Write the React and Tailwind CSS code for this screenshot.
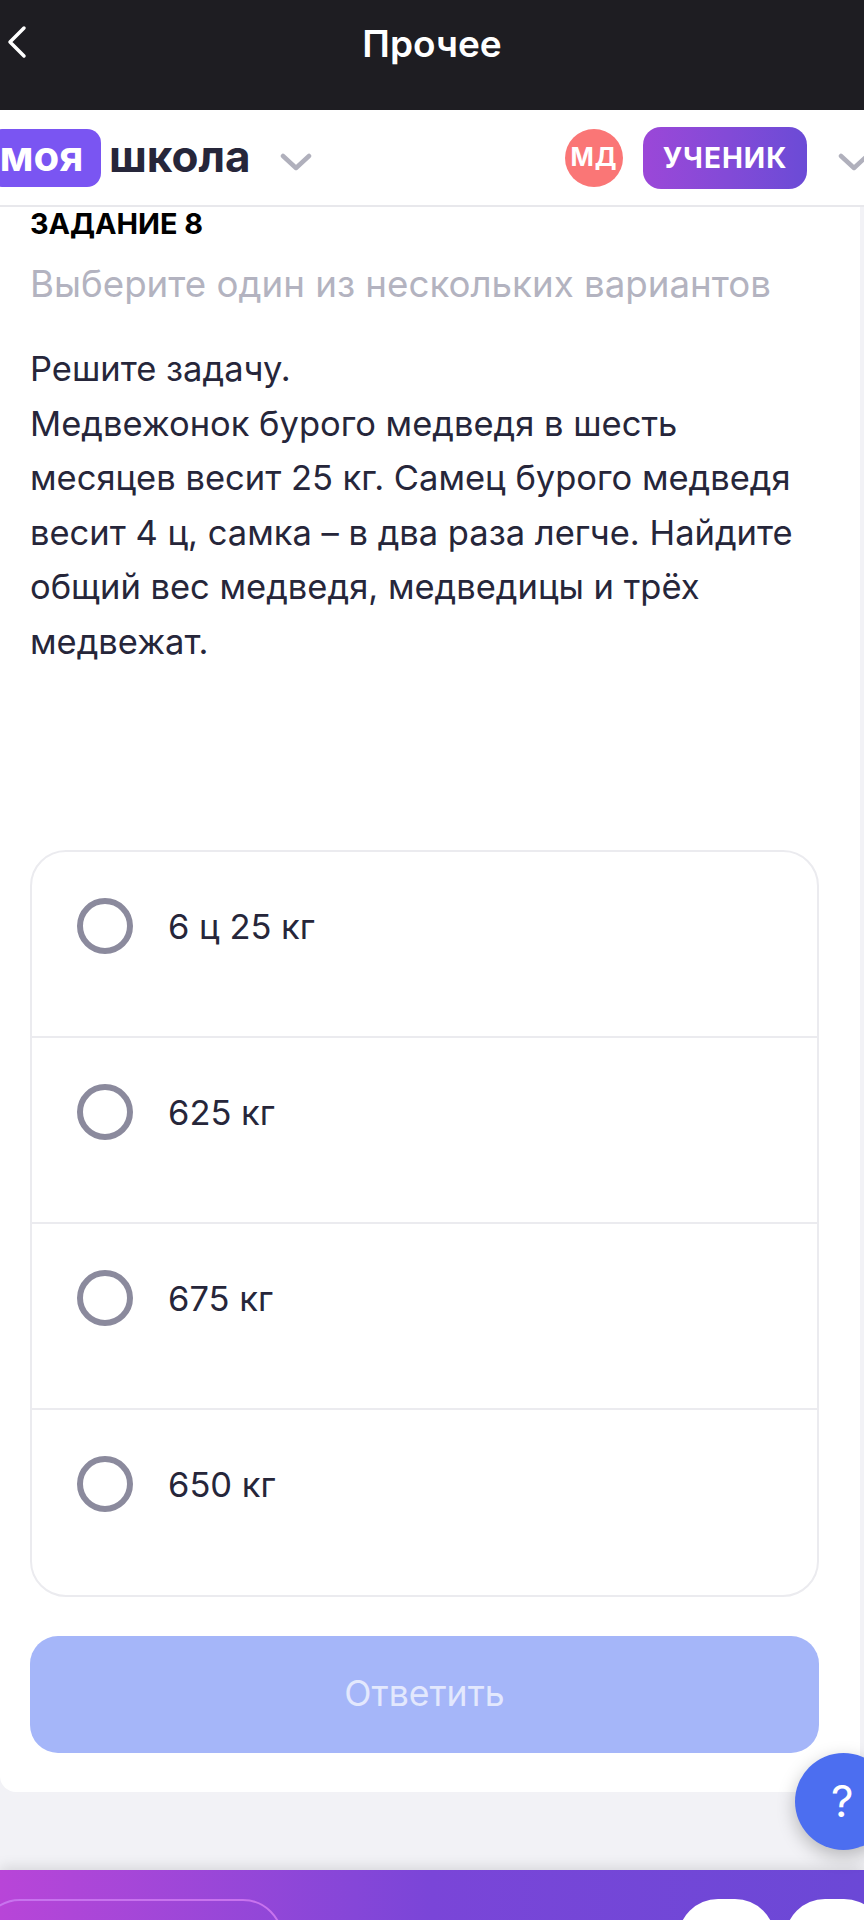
import React from "react";

const answers = ["6 ц 25 кг", "625 кг", "675 кг", "650 кг"];

function Chevron({ className }) {
  return (
    <svg className={className} viewBox="0 0 32 18" fill="none">
      <path d="M3 3l13 12L29 3" stroke="#b0b0bc" strokeWidth="4.5" strokeLinecap="round" strokeLinejoin="round" />
    </svg>
  );
}

function AnswerRow({ text, last }) {
  return (
    <div className={`flex items-start pl-[45px] pt-[46px] ${last ? "h-[185px]" : "h-[186px] border-b-2 border-[#ebebef]"}`}>
      <div className="h-[56px] w-[56px] rounded-full border-[6px] border-[#8b8a9d]" />
      <span className="ml-[35px] mt-[7px] text-[34.5px] leading-[44px] text-[#26263a]">{text}</span>
    </div>
  );
}

export default function App() {
  return (
    <div className="relative flex h-[1920px] w-[864px] flex-col overflow-hidden bg-[#f2f2f6] font-['Inter',sans-serif]">
      {/* Top bar */}
      <header className="relative flex h-[110px] shrink-0 justify-center bg-[#1e1d22] pt-[20px]">
        <svg className="absolute left-[6px] top-[25px] h-[34px] w-[22px]" viewBox="0 0 22 34" fill="none">
          <path d="M18 3L4 17l14 14" stroke="#fff" strokeWidth="3.5" strokeLinecap="round" strokeLinejoin="round" />
        </svg>
        <h1 className="text-[37px] font-semibold leading-[48px] text-white">Прочее</h1>
      </header>

      {/* School nav */}
      <nav className="flex h-[97px] shrink-0 items-center border-b-2 border-[#e8e8ec] bg-white">
        <div className="ml-[-12px] flex h-[58px] w-[113px] items-center justify-center rounded-[14px] bg-[#7a55f2] pb-[4px] pr-[6px] text-[42px] font-bold text-white">
          моя
        </div>
        <span className="mb-[4px] ml-[8px] text-[44px] font-bold text-[#26263a]">школа</span>
        <Chevron className="ml-[29px] mt-[8px] h-[18px] w-[32px]" />
        <div className="ml-auto flex h-[58px] w-[58px] items-center justify-center rounded-full bg-[#fa7676] text-[25px] font-bold tracking-[1px] text-white">
          МД
        </div>
        <div className="ml-[20px] flex h-[62px] w-[164px] items-center justify-center rounded-[18px] bg-gradient-to-r from-[#9b47d8] to-[#6b4bd6] text-[28px] font-bold tracking-[1px] text-white">
          УЧЕНИК
        </div>
        <Chevron className="mr-[-6px] ml-[31px] mt-[8px] h-[18px] w-[32px] shrink-0" />
      </nav>

      {/* Task card */}
      <main className="mr-[4px] h-[1585px] shrink-0 rounded-bl-[16px] bg-white pl-[30px] pr-[41px]">
        <h2 className="mt-[1px] text-[28.8px] font-bold leading-[32px] text-black">ЗАДАНИЕ 8</h2>
        <p className="mt-[22px] text-[36.7px] leading-[44px] text-[#b3b3c0]">Выберите один из нескольких вариантов</p>
        <p className="mt-[36px] text-[34.5px] leading-[54.6px] text-[#26263a]">
          Решите задачу.
          <br />
          Медвежонок бурого медведя в шесть месяцев весит 25 кг. Самец бурого медведя весит 4 ц, самка – в два раза легче. Найдите общий вес медведя, медведицы и трёх медвежат.
        </p>
        <div className="mt-[180px] overflow-hidden rounded-[36px] border-2 border-[#ebebef]">
          {answers.map((a, i) => (
            <AnswerRow key={a} text={a} last={i === answers.length - 1} />
          ))}
        </div>
        <button className="mt-[39px] h-[117px] w-full rounded-[28px] bg-[#a5b6f9] text-[35.6px] text-[#e3e8fd]">Ответить</button>
      </main>

      {/* Help button */}
      <div className="absolute left-[795px] top-[1753px] flex h-[97px] w-[97px] items-start justify-start rounded-full bg-[#4c6ef0] pl-[36px] pt-[22px] text-[44px] leading-[52px] text-white shadow-[0_6px_18px_rgba(0,0,0,0.25)]">
        ?
      </div>

      {/* Bottom bar */}
      <footer className="mt-[78px] flex h-[50px] shrink-0 items-start overflow-hidden bg-gradient-to-r from-[#b845d8] via-[#7a45d8] to-[#6b48d6] pt-[29px] shadow-[0_-4px_12px_rgba(0,0,0,0.1)]">
        <div className="ml-[-20px] h-[80px] w-[303px] rounded-[40px] border-2 border-[#c873ee]" />
        <div className="ml-auto h-[80px] w-[97px] rounded-[40px] bg-white" />
        <div className="ml-[10px] mr-[-20px] h-[80px] w-[99px] rounded-[40px] bg-white" />
      </footer>
    </div>
  );
}
